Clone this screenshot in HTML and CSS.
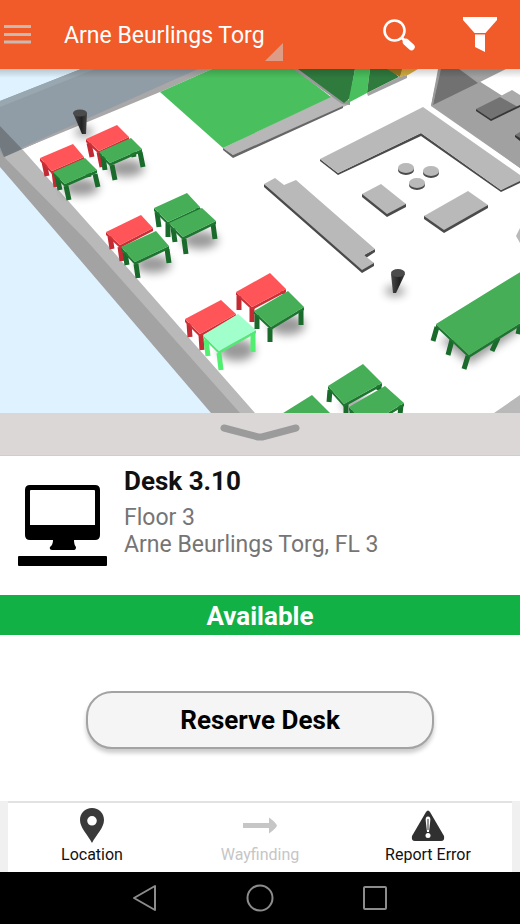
FILE: index.html
```html
<!DOCTYPE html>
<html lang="en">
<head>
    <meta charset="UTF-8">
    <meta name="viewport" content="width=device-width, initial-scale=1">
    <title>Desk 3.10</title>
    <link rel="stylesheet" href="styles.css">
</head>
<body>
    <header class="topbar">
        <button class="icon-button menu" type="button" aria-label="Menu">
            <svg width="28" height="20" viewBox="0 0 28 20"><path d="M0 1.5h27M0 9.5h27M0 17h27" stroke="#c9b9b1" stroke-width="3"/></svg>
        </button>
        <button class="place" type="button">
            <span>Arne Beurlings Torg</span>
            <svg width="18" height="18" viewBox="0 0 18 18"><path d="M18 0v18H0z" fill="#dd9c86"/></svg>
        </button>
        <button class="icon-button search" type="button" aria-label="Search">
            <svg width="34" height="34" viewBox="0 0 34 34">
                <circle cx="12.500" cy="12.500" r="10" fill="none" stroke="#fff" stroke-width="2.600"/>
                <path d="M19.500 19.500l3 3" stroke="#fff" stroke-width="3"/>
                <path d="M24 24l5.500 5" stroke="#fff" stroke-width="6.500" stroke-linecap="round"/>
            </svg>
        </button>
        <button class="icon-button" type="button" aria-label="Filter">
            <svg width="34" height="36" viewBox="0 0 34 36">
                <path d="M0 0h34v3L22.500 16h-11L0 3z" fill="#fff"/>
                <path d="M12 17.500h10V35l-10-5z" fill="#fff"/>
            </svg>
        </button>
    </header>

    <main>
        <svg class="map" viewBox="0 69 520 344" role="img" aria-label="Floor 3 map">
            <defs>
                <filter id="soft" x="-50%" y="-50%" width="200%" height="200%"><feGaussianBlur stdDeviation="5"/></filter>
                <linearGradient id="cone"><stop offset="0" stop-color="#4a4a4a"/><stop offset="0.600" stop-color="#222"/><stop offset="1" stop-color="#444"/></linearGradient>
                <linearGradient id="fade" x2="0" y2="1"><stop offset="0" stop-opacity="0.180"/><stop offset="1" stop-opacity="0"/></linearGradient>
            </defs>
            <rect y="69" width="520" height="344" fill="#dff2ff"/>
            <!-- floor -->
            <path d="M22 149L212 69H520V413H254z" fill="#fff"/>

            <!-- outer walls -->
            <path d="M0 126L88 240L241 413H211L63 240L0 167z" fill="#a3a3a3"/>
            <path d="M4 157L22 149L103 240L255 413H240L86 240z" fill="#b9b9b9"/>
            <path d="M0 101L81 69H200L25 148L4 157L0 151z" fill="#919da6"/>
            <path d="M0 101L81 69H95L0 107z" fill="#99a7b0"/>
            <path d="M22 149L160 92L212 69H198L17 150z" fill="#a9a7a7"/>
            <path d="M0 126L22 149L4 157L0 147z" fill="#737a7f"/>

            <!-- green room -->
            <path d="M223 148L331 96L350 104L233 155z" fill="#b7b7b7"/>
            <path d="M223 148L233 155L343 106V108L233 158L223 150z" fill="#666"/>
            <path d="M160 92L212 69H295L331 97L223 148z" fill="#4abf5d"/>
            <path d="M293 69H300L350 101V105L342 104z" fill="#989898"/>
            <path d="M298 69H355L350 98L344 103z" fill="#2f7a3d"/>
            <path d="M355 69H370L367 93L348 103z" fill="#4abf5d"/>
            <path d="M370 69H390L399 77L367 93z" fill="#2f7a3d"/>
            <path d="M367 93L399 77L407 75V78L368 96z" fill="#a2a2a2"/>
            <path d="M387 69H403L400 77z" fill="#957524"/>
            <path d="M402 69H418L408 75L400 77z" fill="#d6ad3f"/>

            <!-- glass room -->
            <path d="M431 106L439 69H506L478 83L520 110V168z" fill="#a3a3a3"/>
            <path d="M433 105L440 69H460L520 107V168z" fill="#a1a1a1"/>
            <path d="M433 105L440 69H459L478 83z" fill="#717171"/>
            <path d="M431 106L438 69H441L433 105z" fill="#9a9a9a"/>
            <path d="M499 97L512 90L520 95V108z" fill="#aaa"/>
            <path d="M476 109L500 97L518 107L491 119z" fill="#737373"/>
            <path d="M476 109L491 119L520 105V107L491 121L476 111z" fill="#373737"/>
            <path d="M515 135L520 132V141z" fill="#737373"/>
            <path d="M515 135L520 138V141L515 137z" fill="#333"/>

            <!-- counters -->
            <g class="block">
                <path class="side" d="M320 159L338 173L421 133L501 190L520 180V183L501 192L421 136L338 175L320 161z"/>
                <path class="face" d="M320 159L423 107L520 175V181L501 190L421 133L338 173z"/>
                <path class="side" d="M264 184V187L362 273L374 266V263L363 260z"/>
                <path class="side" d="M364 255L375 249V252L366 258z"/>
                <path class="face" d="M264 184L275 178L284 185L296 180L375 249L364 255L374 263L362 270z"/>
                <path class="side" d="M362 194V197L387 217L406 207V204z"/>
                <path class="face" d="M362 194L381 184L406 204L387 214z"/>
                <path class="side" d="M424 216V219L444 233L488 208V205z"/>
                <path class="face" d="M424 216L468 191L488 205L444 230z"/>
                <path class="face" d="M516 236L520 228V243zM494 413L520 395V413z"/>
                <ellipse class="side" cx="406" cy="170" rx="8" ry="5"/>
                <ellipse class="face" cx="406" cy="168" rx="8" ry="5"/>
                <ellipse class="side" cx="431" cy="173" rx="8" ry="5"/>
                <ellipse class="face" cx="431" cy="171" rx="8" ry="5"/>
                <ellipse class="side" cx="417" cy="185" rx="8" ry="5"/>
                <ellipse class="face" cx="417" cy="183" rx="8" ry="5"/>
            </g>

            <!-- shadows -->
            <g filter="url(#soft)" opacity="0.400">
                <ellipse cx="81" cy="187" rx="18" ry="9"/>
                <ellipse cx="126" cy="168" rx="18" ry="9"/>
                <ellipse cx="200" cy="240" rx="18" ry="9"/>
                <ellipse cx="153" cy="264" rx="18" ry="9"/>
                <ellipse cx="237" cy="350" rx="18" ry="11"/>
                <ellipse cx="287" cy="325" rx="18" ry="10"/>
                <ellipse cx="360" cy="405" rx="18" ry="7"/>
                <path d="M440 340L470 364L518 332V318z"/>
                <ellipse cx="84" cy="132" rx="9" ry="5"/>
                <ellipse cx="395" cy="291" rx="10" ry="5"/>
            </g>

            <!-- bins -->
            <path d="M73 113L82 134H86L87 113z" fill="url(#cone)"/>
            <ellipse cx="80" cy="113" rx="7" ry="3.500" fill="#4b4b4b"/>
            <path d="M391 274L393 293H396L405 274z" fill="url(#cone)"/>
            <ellipse cx="398" cy="273" rx="7" ry="4" fill="#4b4b4b"/>

            <!-- desks: legs, front edge, top -->
            <g class="desk taken">
                <path class="leg" d="M44 162L47 176M54 172L56 187"/>
                <path class="edge" d="M40 158L52 171L84 157V160L52 174L40 161z"/>
                <path class="top" d="M40 158L73 144L84 157L52 171z"/>
            </g>
            <g class="desk taken">
                <path class="leg" d="M89 143L92 157M99 152L102 167"/>
                <path class="edge" d="M86 139L99 151L129 137V140L99 154L86 142z"/>
                <path class="top" d="M86 139L117 125L129 137L99 151z"/>
            </g>
            <g class="desk free">
                <path class="leg" d="M57 176L60 190M66 186L69 200M95 174L98 187M87 167L89 177"/>
                <path class="edge" d="M53 172L65 184L97 170V173L65 187L53 175z"/>
                <path class="top" d="M53 172L85 158L97 170L65 184z"/>
            </g>
            <g class="desk free">
                <path class="leg" d="M103 156L105 170M112 165L115 180M140 152L143 167M132 148L134 157"/>
                <path class="edge" d="M99 152L110 163L142 149V152L110 166L99 155z"/>
                <path class="top" d="M99 152L131 138L142 149L110 163z"/>
            </g>
            <g class="desk free">
                <path class="leg" d="M157 212L159 227M168 223V237M198 208V211"/>
                <path class="edge" d="M154 208L168 222L200 207V210L168 225L154 211z"/>
                <path class="top" d="M154 208L187 193L200 207L168 222z"/>
            </g>
            <g class="desk free">
                <path class="leg" d="M173 228L175 242M184 239L186 254M213 224L215 239"/>
                <path class="edge" d="M169 223L183 237L216 221V224L183 240L169 226z"/>
                <path class="top" d="M169 223L202 208L216 221L183 237z"/>
            </g>
            <g class="desk taken">
                <path class="leg" d="M110 236L112 249M120 247L122 261"/>
                <path class="edge" d="M106 232L120 245L153 228V231L120 248L106 235z"/>
                <path class="top" d="M106 232L141 215L153 228L120 245z"/>
            </g>
            <g class="desk free">
                <path class="leg" d="M125 252L127 265M136 264L138 278M167 249L169 263"/>
                <path class="edge" d="M121 247L135 262L169 246V249L135 265L121 250z"/>
                <path class="top" d="M121 247L156 231L169 246L135 262z"/>
            </g>
            <g class="desk taken">
                <path class="leg" d="M189 323L190 337M201 335L202 350"/>
                <path class="edge" d="M185 319L200 334L236 314V317L200 337L185 322z"/>
                <path class="top" d="M185 319L221 300L236 314L200 334z"/>
            </g>
            <g class="desk taken">
                <path class="leg" d="M239 296V310M252 308V322M283 291V294"/>
                <path class="edge" d="M236 292L252 307L286 289V292L252 310L236 295z"/>
                <path class="top" d="M236 292L270 273L286 289L252 307z"/>
            </g>
            <g class="desk selected">
                <path class="leg" d="M206 340L208 356M219 353L221 370M253 333V352"/>
                <path class="edge" d="M203 335L219 351L256 330V333L219 354L203 338z"/>
                <path class="top" d="M203 335L238 314L256 330L219 351z"/>
            </g>
            <g class="desk free">
                <path class="leg" d="M257 315V329M270 328V342M301 310V325"/>
                <path class="edge" d="M254 311L271 327L304 307V310L271 330L254 314z"/>
                <path class="top" d="M254 311L288 291L304 307L271 327z"/>
            </g>
            <g class="desk free">
                <path class="leg" d="M330 390L329 402M346 404V415M379 385V390"/>
                <path class="edge" d="M328 386L344 404L382 383V386L344 407L328 389z"/>
                <path class="top" d="M328 386L363 364L382 383L344 404z"/>
            </g>
            <g class="desk free">
                <path class="leg" d="M352 410V415M401 405L400 415"/>
                <path class="edge" d="M349 407L366 426L404 403V406L366 429L349 410z"/>
                <path class="top" d="M349 407L385 386L404 403L366 426z"/>
            </g>
            <g class="desk free">
                <path class="top" d="M280 415L312 395L332 415z"/>
            </g>
            <g class="desk free">
                <path class="leg" d="M437 327L433 341M452 340L448 355M468 356L464 369M498 338L492 351M520 325L518 334"/>
                <path class="edge" d="M436 324L469 355L530 317V320L469 358L436 327z"/>
                <path class="top" d="M436 324L530 266V317L469 355z"/>
            </g>
            <rect y="69" width="520" height="9" fill="url(#fade)"/>
        </svg>

        <section class="panel">
            <button class="handle" type="button" aria-label="Collapse">
                <svg width="80" height="18" viewBox="0 0 80 18"><path d="M4 5l34 9h4l34-9" fill="none" stroke="#9b9b9b" stroke-width="7" stroke-linecap="round" stroke-linejoin="round"/></svg>
            </button>
            <div class="details">
                <svg width="90" height="82" viewBox="0 0 90 82">
                    <path fill-rule="evenodd" d="M12 0H77Q82 0 82 5V50Q82 55 77 55H56Q56 60 58 62Q58 65 56 65H34Q31 65 32 62Q35 60 35 55H12Q7 55 7 50V5Q7 0 12 0zM13 5Q12 5 12 6V40H77V6Q77 5 76 5z"/>
                    <rect y="71" width="89" height="10" rx="1"/>
                </svg>
                <div>
                    <h1>Desk 3.10</h1>
                    <p>Floor 3</p>
                    <p>Arne Beurlings Torg, FL 3</p>
                </div>
            </div>
            <div class="status">Available</div>
            <div class="action">
                <button class="reserve" type="button">Reserve Desk</button>
            </div>
        </section>
    </main>

    <nav class="tabs">
        <button type="button">
            <svg width="24" height="36" viewBox="0 0 24 36"><path fill="#3a3a3a" fill-rule="evenodd" d="M12 0C5 0 0 5 0 12C0 20 8 27 12 35C16 27 24 20 24 12C24 5 19 0 12 0zM12 8a4.800 4.800 0 1 1 0 9.600a4.800 4.800 0 1 1 0-9.600z"/></svg>
            Location
        </button>
        <button type="button" disabled>
            <svg width="36" height="36" viewBox="0 0 36 36"><path d="M1 15h26V9.500q7 5 8 8q-1 3-8 8V20H1z" fill="#c6c6c6"/></svg>
            Wayfinding
        </button>
        <button type="button">
            <svg width="34" height="36" viewBox="0 0 34 36">
                <path d="M15 4q2-3 4 0l14 24q1 5-3 5H4q-4 0-3-5z" fill="#303030"/>
                <path d="M17 8.500q3 0 2.200 5L18 24h-2l-1.200-10.500q-.8-5 2.200-5z" fill="#fff"/>
                <path d="M17 11v11" stroke="#303030" stroke-width="1"/>
                <circle cx="17" cy="27.500" r="2.500" fill="#fff"/>
            </svg>
            Report Error
        </button>
    </nav>

    <div class="system">
        <button type="button" aria-label="Back"><svg width="26" height="28" viewBox="0 0 26 28"><path d="M23 2v24L2 14z" fill="none" stroke="#8c8c8c" stroke-width="2" stroke-linejoin="round"/></svg></button>
        <button type="button" aria-label="Home"><svg width="28" height="28" viewBox="0 0 28 28"><circle cx="14" cy="14" r="12.500" fill="none" stroke="#8c8c8c" stroke-width="2"/></svg></button>
        <button type="button" aria-label="Recent"><svg width="26" height="28" viewBox="0 0 26 28"><rect x="2" y="3" width="22" height="22" rx="1" fill="none" stroke="#8c8c8c" stroke-width="2"/></svg></button>
    </div>
</body>
</html>
```

FILE: styles.css
```css
* {
    box-sizing: border-box;
}

body {
    margin: 0;
    min-height: 100vh;
    display: flex;
    flex-direction: column;
    font-family: Roboto, sans-serif;
    background-color: #fff;
}

button {
    border: none;
    padding: 0;
    background: none;
    font-family: inherit;
    cursor: pointer;
}

svg {
    display: block;
    flex-shrink: 0;
}

.topbar {
    display: flex;
    align-items: center;
    height: 69px;
    padding-right: 23px;
    background-color: #f15a29;
}

.menu {
    padding-left: 4px;
}

.place {
    display: flex;
    height: 100%;
    margin-left: 32px;
    color: #fff;
    font-size: 23px;
    line-height: 71px;
}

.place svg {
    align-self: flex-end;
    margin-bottom: 8px;
}

.search {
    margin-left: auto;
    margin-right: 47px;
}

main {
    flex: 1;
    display: flex;
    flex-direction: column;
}

.map {
    width: 100%;
    height: auto;
}

.block .face {
    fill: #b9b9b9;
}

.block .side {
    fill: #4a4a4a;
}

.desk .leg {
    fill: none;
    stroke-width: 5;
}

.free .leg {
    stroke: #1a6a2b;
}

.free .edge {
    fill: #1d7530;
}

.free .top {
    fill: #45ae56;
}

.taken .leg {
    stroke: #c22b33;
}

.taken .edge {
    fill: #cc2f36;
}

.taken .top {
    fill: #ff5558;
}

.selected .leg {
    stroke: #50ef70;
}

.selected .edge {
    fill: #55e878;
}

.selected .top {
    fill: #a0ffcb;
}

.panel {
    flex: 1;
    display: flex;
    flex-direction: column;
}

.handle {
    display: flex;
    justify-content: center;
    height: 43px;
    padding-top: 10px;
    background-color: #dbd7d6;
    border-bottom: 1px solid #d0cdcc;
}

.details {
    display: flex;
    gap: 16px;
    height: 139px;
    padding: 10px 18px;
}

.details svg {
    margin-top: 19px;
}

h1 {
    margin: 0 0 8px;
    font-size: 26px;
    line-height: 30px;
    color: #111;
}

p {
    margin: 0;
    font-size: 23px;
    line-height: 27px;
    color: #757575;
}

.status {
    height: 40px;
    line-height: 43px;
    text-align: center;
    font-size: 26px;
    font-weight: bold;
    color: #fff;
    background-color: #11b146;
}

.action {
    flex: 1;
    display: flex;
    justify-content: center;
    align-items: center;
    padding: 3px 86px 0;
}

.reserve {
    width: 100%;
    height: 58px;
    border: 2px solid #a3a3a3;
    border-radius: 26px;
    background-color: #f5f5f5;
    box-shadow: 0 4px 4px #ccc;
    font-size: 26px;
    font-weight: bold;
}

.tabs {
    display: flex;
    height: 71px;
    border: 0 solid #f0f0f0;
    border-width: 0 8px;
    box-shadow: inset 0 2px #e2e2e2;
}

.tabs button {
    flex: 1;
    display: flex;
    flex-direction: column;
    align-items: center;
    padding-top: 7px;
    font-size: 16px;
    line-height: 21px;
    color: #111;
}

.tabs button:disabled {
    color: #c6c6c6;
}

.system {
    display: flex;
    justify-content: center;
    align-items: center;
    gap: 88px;
    height: 52px;
    background-color: #000;
}
```
